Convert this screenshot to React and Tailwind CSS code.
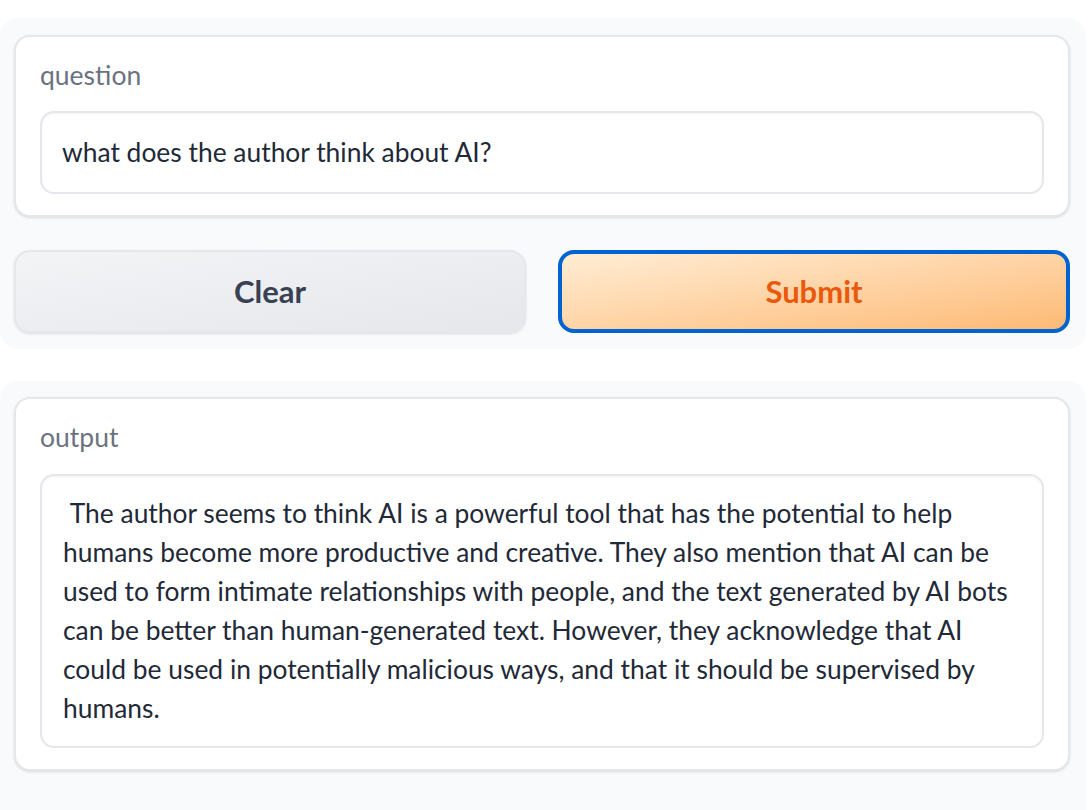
import React from 'react';

const answer =
  ' The author seems to think AI is a powerful tool that has the potential to help humans become more productive and creative. They also mention that AI can be used to form intimate relationships with people, and the text generated by AI bots can be better than human-generated text. However, they acknowledge that AI could be used in potentially malicious ways, and that it should be supervised by humans.';

const Card = ({ label, gap, children }) => (
  <div className="bg-white border-2 border-[#e5e7eb] rounded-[16px] shadow-sm pt-[23px] pb-[21px] px-[24px]">
    <div className={`h-[30px] leading-[30px] text-[26.5px] text-[#6b7280] ${gap}`}>{label}</div>
    {children}
  </div>
);

export default function App() {
  return (
    <div className="min-h-[810px] bg-white pt-[18px] text-[#1f2937]" style={{ fontFamily: 'Lato, "Noto Sans", sans-serif' }}>
      {/* Inputs */}
      <div className="w-[1086px] bg-[#f9fafb] rounded-[18px] pt-[17px] pb-[16px] pl-[14px] pr-[16px]">
        <Card label="question" gap="mb-[21px]">
          <div className="h-[83px] flex items-center px-[20px] border-2 border-[#e5e7eb] rounded-[14px] shadow-[inset_0_1px_3px_rgba(0,0,0,0.05)] text-[26.4px]">
            what does the author think about AI?
          </div>
        </Card>

        <div className="grid grid-cols-2 gap-[32px] mt-[33px]">
          <button className="h-[83px] rounded-[16px] border-2 border-[#e5e7eb] bg-gradient-to-br from-[#f3f4f6] to-[#e5e7eb] shadow-sm text-[31px] font-bold text-[#374151]">
            Clear
          </button>
          <button className="h-[83px] rounded-[16px] border-4 border-[#0063d1] bg-gradient-to-br from-[#ffedd5] to-[#fdba74] text-[31px] font-bold text-[#ea580c]">
            Submit
          </button>
        </div>
      </div>

      {/* Output */}
      <div className="w-[1086px] bg-[#f9fafb] rounded-t-[18px] mt-[32px] pt-[16px] pb-[60px] pl-[14px] pr-[16px]">
        <Card label="output" gap="mb-[22px]">
          <div className="border-2 border-[#e5e7eb] rounded-[14px] shadow-[inset_0_1px_3px_rgba(0,0,0,0.05)] pt-[18px] pb-[18px] pl-[21px] pr-[20px] text-[26.4px] leading-[39px] whitespace-pre-wrap">
            {answer}
          </div>
        </Card>
      </div>
    </div>
  );
}
